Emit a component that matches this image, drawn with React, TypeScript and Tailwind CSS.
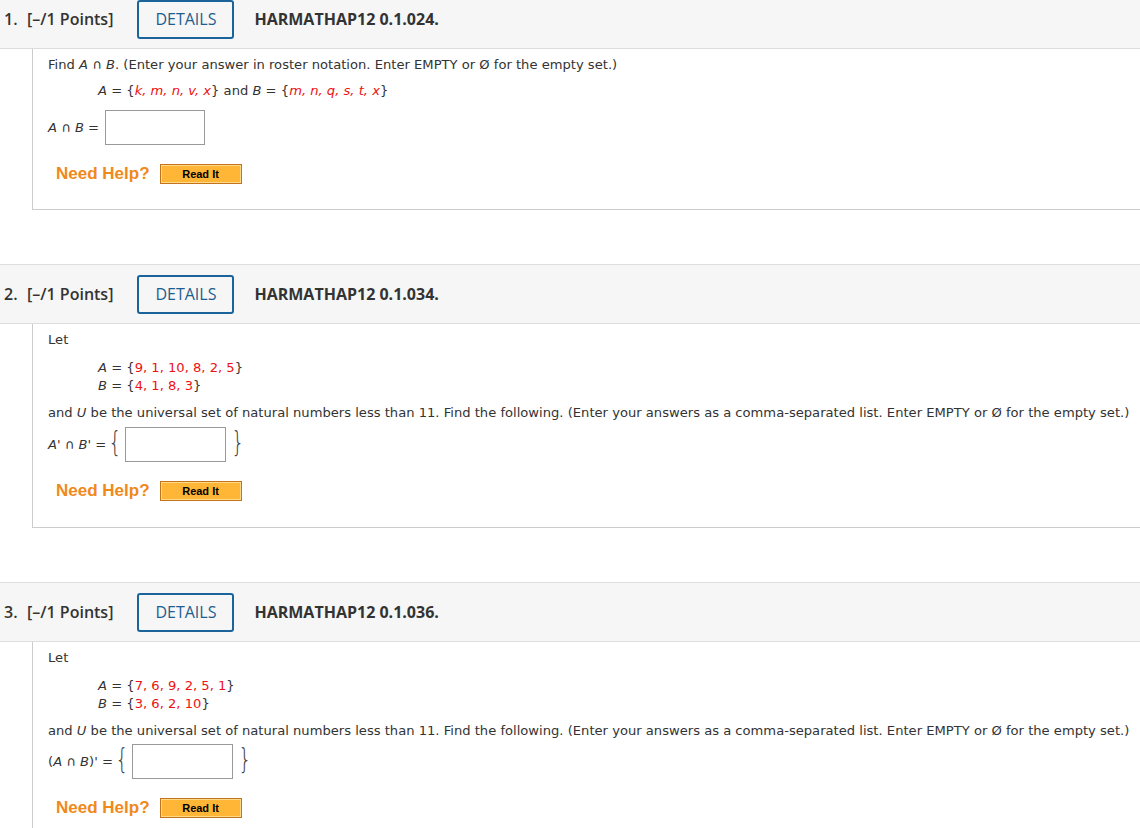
import React from 'react';

const body = "font-['DejaVu_Sans',sans-serif] text-[13.12px] text-[#333]";

function Header({ num, code }: { num: number; code: string }) {
  return (
    <div className="flex items-center h-[60px] bg-[#f6f6f6] border-y border-[#ddd] font-['Open_Sans',sans-serif] text-[16px] font-semibold text-[#333]">
      <span className="pl-[4px] w-[27px]">{num}.</span>
      <span>[–/1 Points]</span>
      <button className="ml-[24px] w-[97px] h-[39px] border-2 border-[#1a639b] rounded-[3px] text-[#1d5e90] font-normal text-[16px] bg-transparent">
        DETAILS
      </button>
      <span className="ml-[20px] font-bold">{code}</span>
    </div>
  );
}

function Red({ children, italic }: { children: React.ReactNode; italic?: boolean }) {
  return <span className={`text-[#ee1111] ${italic ? 'italic' : ''}`}>{children}</span>;
}

function I({ children }: { children: React.ReactNode }) {
  return <i>{children}</i>;
}

function Help({ mt }: { mt: string }) {
  return (
    <div className={`flex items-center ml-[8px] ${mt}`}>
      <span className="font-['Liberation_Sans',Arial,sans-serif] font-bold text-[17px] text-[#f0891a] leading-5">Need Help?</span>
      <span className="ml-[10px] w-[82px] h-[20px] border border-[#c3731a] bg-[#ffb636] p-0">
        <span className="flex items-center justify-center w-full h-full border border-[#ffd98a] font-['Liberation_Sans',Arial,sans-serif] font-bold text-[11px] text-black">
          Read It
        </span>
      </span>
    </div>
  );
}

function Answer({ label, box }: { label: React.ReactNode; box: string }) {
  return (
    <div className="flex items-center">
      <span>{label}</span>
      <span className="ml-0 font-['DejaVu_Sans',sans-serif] text-[28px] font-extralight leading-none text-[#444] -mt-[3px] scale-x-75">{'{'}</span>
      <span className={`ml-[1px] h-[35px] border border-[#999] bg-white ${box}`} />
      <span className="ml-[3px] font-['DejaVu_Sans',sans-serif] text-[28px] font-extralight leading-none text-[#444] -mt-[3px] scale-x-75">{'}'}</span>
    </div>
  );
}

function Body({ children, pb }: { children: React.ReactNode; pb: string }) {
  return (
    <div className={`ml-[32px] border-l border-b border-[#ccc] pl-[15px] pt-[8px] ${pb} ${body}`}>
      {children}
    </div>
  );
}

function LetSets({ a, b }: { a: string; b: string }) {
  return (
    <>
      <div className="leading-4">Let</div>
      <div className="mt-[11px] ml-[50px] leading-[18px]">
        <div><I>A</I> = {'{'}<Red>{a}</Red>{'}'}</div>
        <div><I>B</I> = {'{'}<Red>{b}</Red>{'}'}</div>
      </div>
      <div className="mt-[10px] leading-4">
        and <I>U</I> be the universal set of natural numbers less than 11. Find the following. (Enter your answers as a comma-separated list. Enter EMPTY or Ø for the empty set.)
      </div>
    </>
  );
}

export default function App() {
  return (
    <div className="w-[1140px] h-[828px] overflow-hidden bg-white">
      <div className="-mt-[11px]">
        {/* Question 1 */}
        <Header num={1} code="HARMATHAP12 0.1.024." />
        <Body pb="pb-[25px]">
          <div className="leading-4">
            Find <I>A</I> ∩ <I>B</I>. (Enter your answer in roster notation. Enter EMPTY or Ø for the empty set.)
          </div>
          <div className="mt-[10px] ml-[50px] leading-4">
            <I>A</I> = {'{'}<Red italic>k, m, n, v, x</Red>{'}'} and <I>B</I> = {'{'}<Red italic>m, n, q, s, t, x</Red>{'}'}
          </div>
          <div className="mt-[11px] flex items-center">
            <span><I>A</I> ∩ <I>B</I> =</span>
            <span className="ml-[6px] w-[100px] h-[35px] border border-[#999] bg-white" />
          </div>
          <Help mt="mt-[19px]" />
        </Body>
        <div className="h-[54px]" />

        {/* Question 2 */}
        <Header num={2} code="HARMATHAP12 0.1.034." />
        <Body pb="pb-[26px]">
          <LetSets a="9, 1, 10, 8, 2, 5" b="4, 1, 8, 3" />
          <div className="mt-[6px]">
            <Answer label={<><I>A</I>' ∩ <I>B</I>' =</>} box="w-[101px]" />
          </div>
          <Help mt="mt-[19px]" />
        </Body>
        <div className="h-[54px]" />

        {/* Question 3 */}
        <Header num={3} code="HARMATHAP12 0.1.036." />
        <Body pb="pb-[26px]">
          <LetSets a="7, 6, 9, 2, 5, 1" b="3, 6, 2, 10" />
          <div className="mt-[5px]">
            <Answer label={<>(<I>A</I> ∩ <I>B</I>)' =</>} box="w-[101px]" />
          </div>
          <Help mt="mt-[19px]" />
        </Body>
      </div>
    </div>
  );
}
